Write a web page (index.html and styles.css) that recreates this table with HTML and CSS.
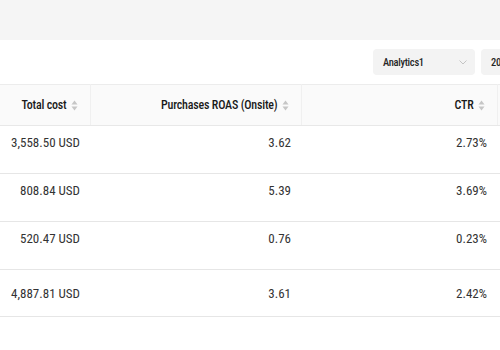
FILE: index.html
```html
<!DOCTYPE html>
<html>
<head>
<meta charset="utf-8">
<link rel="stylesheet" href="styles.css">
</head>
<body>
<div class="page">
  <div class="topbar"></div>
  <div class="panel">
    <div class="toolbar">
      <div class="select">
        <span class="select-text">Analytics1</span>
        <svg class="chev" width="8" height="5" viewBox="0 0 8 5"><path d="M0.5 0.5 L4 4 L7.5 0.5" fill="none" stroke="#c4c4c4" stroke-width="1"/></svg>
      </div>
      <div class="select select-wide">
        <span class="select-text">2024-01-01 ~ 2024-01-31</span>
      </div>
    </div>
    <table class="grid">
      <colgroup>
        <col class="c1"><col class="c2"><col class="c3"><col class="c4">
      </colgroup>
      <thead>
        <tr>
          <th><span class="th-in">Total cost<svg class="sort" width="7" height="11" viewBox="0 0 7 11"><path d="M3.5 0.5 L6.5 4.5 L0.5 4.5 Z M3.5 10.5 L6.5 6.5 L0.5 6.5 Z" fill="#c6c6c6"/></svg></span></th>
          <th><span class="th-in">Purchases ROAS (Onsite)<svg class="sort" width="7" height="11" viewBox="0 0 7 11"><path d="M3.5 0.5 L6.5 4.5 L0.5 4.5 Z M3.5 10.5 L6.5 6.5 L0.5 6.5 Z" fill="#c6c6c6"/></svg></span></th>
          <th><span class="th-in">CTR<svg class="sort" width="7" height="11" viewBox="0 0 7 11"><path d="M3.5 0.5 L6.5 4.5 L0.5 4.5 Z M3.5 10.5 L6.5 6.5 L0.5 6.5 Z" fill="#c6c6c6"/></svg></span></th>
          <th></th>
        </tr>
      </thead>
      <tbody>
        <tr><td>3,558.50 USD</td><td>3.62</td><td>2.73%</td><td></td></tr>
        <tr><td>808.84 USD</td><td>5.39</td><td>3.69%</td><td></td></tr>
        <tr><td>520.47 USD</td><td>0.76</td><td>0.23%</td><td></td></tr>
        <tr class="total"><td>4,887.81 USD</td><td>3.61</td><td>2.42%</td><td></td></tr>
      </tbody>
    </table>
  </div>
</div>
</body>
</html>
```
FILE: styles.css
```css
html, body {
  margin: 0;
  padding: 0;
}
body {
  width: 500px;
  height: 350px;
  overflow: hidden;
  background: #ffffff;
  font-family: Roboto, "Liberation Sans", sans-serif;
  font-stretch: condensed;
  color: #333333;
}
.topbar {
  height: 40px;
  background: #f5f5f5;
}
.panel {
  background: #ffffff;
}
.toolbar {
  display: flex;
  gap: 6px;
  height: 44px;
  align-items: center;
  padding-left: 373px;
  box-sizing: border-box;
  white-space: nowrap;
}
.select {
  flex: none;
  width: 102px;
  height: 26px;
  box-sizing: border-box;
  background: #f3f3f3;
  border-radius: 4px;
  display: flex;
  align-items: center;
  justify-content: space-between;
  padding: 0 8px 0 10px;
}
.select-wide {
  width: 170px;
}
.select-text {
  font-size: 10.5px;
  font-weight: 500;
  letter-spacing: -0.3px;
  color: #262626;
}
.chev {
  display: block;
}
.grid {
  border-collapse: collapse;
  table-layout: fixed;
  width: 597px;
}
.c1 { width: 90px; }
.c2 { width: 211px; }
.c3 { width: 196px; }
.c4 { width: 100px; }
.grid th {
  height: 41px;
  box-sizing: border-box;
  background: #fafafa;
  border-top: 1px solid #ececec;
  border-bottom: 1px solid #e8e8e8;
  border-right: 1px solid #f0f0f0;
  padding: 0 12px 0 0;
  text-align: right;
  font-size: 12px;
  font-weight: 500;
  letter-spacing: -0.2px;
  color: #1a1a1a;
  white-space: nowrap;
}
.th-in {
  display: inline-flex;
  align-items: center;
  gap: 4px;
}
.sort {
  display: block;
}
.grid td {
  height: 48px;
  box-sizing: border-box;
  border-bottom: 1px solid #e6e6e6;
  padding: 8px 10px 0 0;
  vertical-align: top;
  text-align: right;
  font-size: 13px;
  line-height: 17px;
  color: #333333;
  white-space: nowrap;
}
.grid tr.total td {
  height: 47px;
  padding-top: 0;
  vertical-align: middle;
}
```
